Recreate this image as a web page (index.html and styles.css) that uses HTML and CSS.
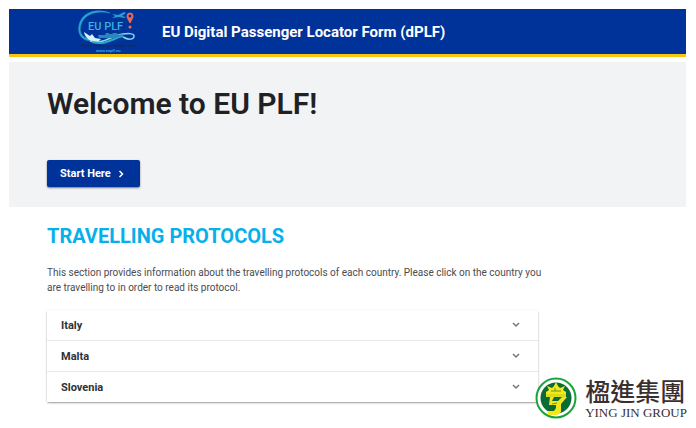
FILE: index.html
```html
<!DOCTYPE html>
<html lang="en">
<head>
    <meta charset="UTF-8">
    <meta name="viewport" content="width=device-width, initial-scale=1.0">
    <link rel="stylesheet" href="styles.css">
    <title>EU Digital Passenger Locator Form (dPLF)</title>
</head>
<body>

<header class="header">
    <svg class="header-logo" viewBox="0 0 60 44" role="img" aria-label="EU PLF">
        <path d="M32 3C19 0 8 4 4 12c-4 9-1 15 7 17l3 2C3 31-2 23 2 12 6 2 19-2 32 3z" fill="#2ba5cf" stroke="#2ba5cf" stroke-width="0.5"/>
        <path d="M6 22l6 4 2-2 3 4 6 1-3 3c-8 0-13-4-14-10z" fill="#d9f0f8"/>
        <path d="M12 31c13 4 20-5 33-7 8-1 11 0 11 2 0 4-6 4-11 1" fill="none" stroke="#8ed3e8" stroke-width="1.5"/>
        <path d="M14 32c14 4 21-4 31-6" fill="none" stroke="#26a9ce" stroke-width="2"/>
        <path d="M20 25h7l1-2h3v1h3l1-1h4l1 2 5-1-2 2-8 2H21z" fill="#2689ba"/>
        <path d="M34 4l6 1 6-3 2 1-4 3 4 1-2 1-5-1-7 1 3-2z" fill="#299dcc"/>
        <path d="M52 13c-2-4-3-5-3-7a3 3 0 0 1 6 0c0 2-1 3-3 7z" fill="#ef6b55" stroke="#ef6b55"/>
        <circle cx="52" cy="6" r="1.500" fill="#063798"/>
        <circle cx="52" cy="17" r="1.500" fill="#ef6b55"/>
        <text class="logo-name" x="10" y="20">EU PLF</text>
        <text class="logo-caption" x="3" y="37">Digital Passenger Locator Form</text>
        <text class="logo-url" x="18" y="42">www.euplf.eu</text>
    </svg>
    <div class="header-title">EU Digital Passenger Locator Form (dPLF)</div>
</header>

<main>
    <section class="welcome">
        <h1>Welcome to EU PLF!</h1>
        <button type="button" class="start-button">
            Start Here
            <svg class="start-icon" viewBox="0 0 8 10" aria-hidden="true"><path d="M2 1l4 4-4 4"/></svg>
        </button>
    </section>

    <section class="protocols">
        <h2>TRAVELLING PROTOCOLS</h2>
        <p>This section provides information about the travelling protocols of each country. Please click on the country you are travelling to in order to read its protocol.</p>
        <div class="country-list">
            <button type="button" class="country" aria-expanded="false">
                Italy
                <svg class="country-icon" viewBox="0 0 8 6" aria-hidden="true"><path d="M1 1l3 3 3-3"/></svg>
            </button>
            <button type="button" class="country" aria-expanded="false">
                Malta
                <svg class="country-icon" viewBox="0 0 8 6" aria-hidden="true"><path d="M1 1l3 3 3-3"/></svg>
            </button>
            <button type="button" class="country" aria-expanded="false">
                Slovenia
                <svg class="country-icon" viewBox="0 0 8 6" aria-hidden="true"><path d="M1 1l3 3 3-3"/></svg>
            </button>
        </div>
    </section>
</main>

<div class="company">
    <svg class="company-logo" viewBox="0 0 42 42" aria-hidden="true">
        <circle cx="21" cy="21" r="19.500" fill="#fff" stroke="#16a43a" stroke-width="2"/>
        <circle cx="21" cy="21" r="15.500" fill="#0b6b35"/>
        <path d="M21 5l2 4 2 2 5-2-2 4 3 2v3H11v-3l3-2-2-4 5 2 2-2z" fill="#f2e81c"/>
        <path d="M11 17h20v3H11z" fill="#d9d91d"/>
        <path d="M15 20h4l-2 4h6l4-4h5l-6 7v8l-4 3h-9v-4h6l2-3v-3h-7z" fill="#f2e81c"/>
        <path d="M16 14h10M20 11v3M17 27l5-1" fill="none" stroke="#68952a" stroke-width="1"/>
    </svg>
    <div class="company-name">
        <div class="company-chinese" lang="zh-Hant">楹進集團</div>
        <div class="company-english">YING JIN GROUP</div>
    </div>
</div>

</body>
</html>
```

FILE: styles.css
```css
* {
    box-sizing: border-box;
}

body {
    margin: 9px 10px 0 9px;
    font-family: Roboto, sans-serif;
    color: #202124;
    background-color: #fff;
}

.header {
    display: flex;
    align-items: center;
    height: 48px;
    padding-left: 69px;
    gap: 24px;
    background-color: #003399;
    border-bottom: 3px solid #f9c80e;
}

.header-logo {
    width: 60px;
    height: 44px;
}

.logo-name {
    font-size: 11px;
    font-weight: 500;
    fill: #38b5dc;
}

.logo-caption {
    font-size: 4px;
    font-weight: 700;
    fill: #102a66;
}

.logo-url {
    font-size: 4px;
    font-weight: 700;
    fill: #39a8dc;
}

.header-title {
    color: #fff;
    font-size: 15px;
    font-weight: 700;
}

.welcome {
    margin-top: 5px;
    padding: 24px 38px 20px;
    background-color: #f1f3f4;
}

h1 {
    margin: 0 0 38px;
    font-size: 30px;
    line-height: 36px;
    font-weight: 600;
}

.start-button {
    display: flex;
    align-items: center;
    gap: 7px;
    height: 27px;
    padding: 0 16px 0 13px;
    border: 0;
    border-radius: 2px;
    background-color: #003399;
    box-shadow: 0 1px 2px #777;
    color: #fff;
    font-family: inherit;
    font-size: 11px;
    font-weight: 700;
}

.start-icon {
    width: 6px;
    height: 8px;
    fill: none;
    stroke: #fff;
    stroke-width: 2;
}

.protocols {
    padding: 17px 38px;
}

h2 {
    margin: 0 0 17px;
    color: #06b0ea;
    font-size: 20px;
    line-height: 24px;
    font-weight: 700;
}

p {
    max-width: 500px;
    margin: 0 0 15px;
    color: #4b4c50;
    font-size: 10px;
    line-height: 15px;
}

.country-list {
    max-width: 491px;
    border-radius: 2px;
    box-shadow: 0 1px 2px #999;
}

.country {
    display: flex;
    align-items: center;
    justify-content: space-between;
    width: 100%;
    height: 31px;
    padding: 0 18px 0 14px;
    border: 0;
    border-bottom: 1px solid #e7e8eb;
    background-color: #fff;
    color: #303134;
    font-family: inherit;
    font-size: 11px;
    font-weight: 700;
}

.country:last-child {
    height: 30px;
    border-bottom: 0;
}

.country-icon {
    width: 8px;
    height: 6px;
    fill: none;
    stroke: #77787b;
    stroke-width: 1.5;
}

.company {
    position: absolute;
    right: 9px;
    bottom: 9px;
    display: flex;
    align-items: center;
    gap: 8px;
}

.company-logo {
    width: 42px;
    height: 42px;
}

.company-name {
    color: #3a302f;
    white-space: nowrap;
}

.company-chinese {
    font-family: "Noto Sans CJK TC", sans-serif;
    font-size: 25px;
    line-height: 24px;
    font-weight: 500;
}

.company-english {
    margin-top: 5px;
    font-family: "Liberation Serif", serif;
    font-size: 13px;
    line-height: 12px;
}
```
